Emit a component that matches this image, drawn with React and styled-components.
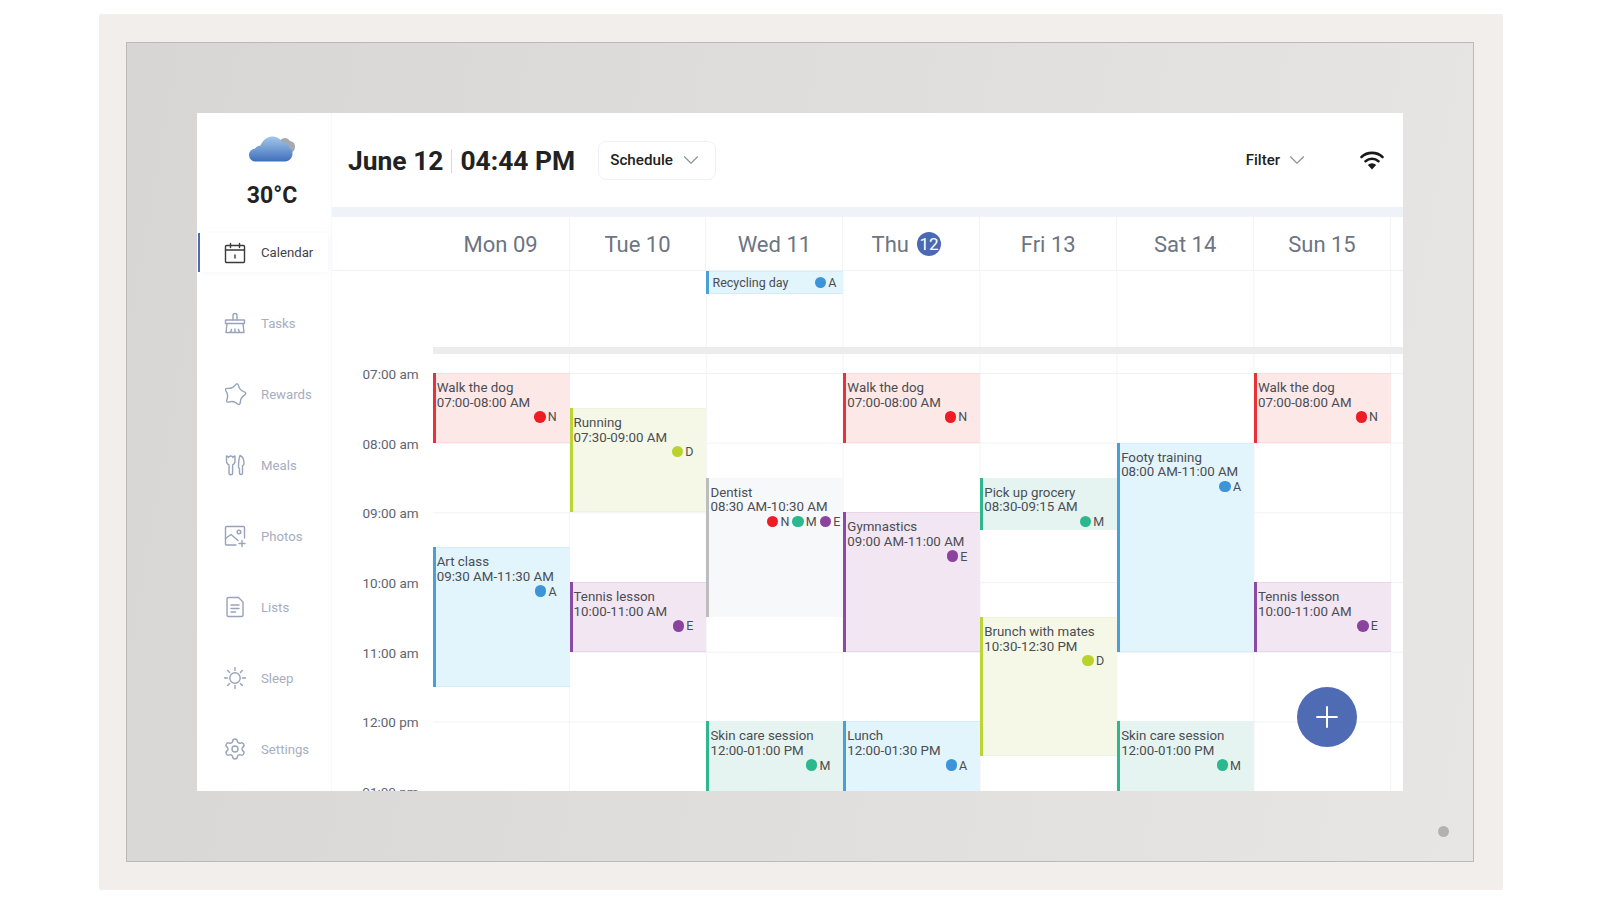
import styled, { createGlobalStyle } from "styled-components";
import { ChevronDown, Plus, Settings } from "lucide-react";

const HOUR = 69.7;
const DAY = 136.9;

const GlobalStyle = createGlobalStyle`
  html, body {
    margin:0;
    background:#ffffff;
    font-family:Roboto, "Liberation Sans", sans-serif;
  }
`
const Page = styled.div`
  width:1600px;
  height:900px;
  box-sizing:border-box;
  padding:14px 97px 10px 99px;
`
const Frame = styled.div`
  height:100%;
  box-sizing:border-box;
  padding:28px 29px 28px 27px;
  background:#f1eeec;
  border-radius:2px;
`
const Bezel = styled.div`
  position:relative;
  height:100%;
  box-sizing:border-box;
  padding:70px;
  background:linear-gradient(100deg, #d7d6d4 0%, #dfdedc 50%, #e7e6e4 100%);
  border:1px solid #bdb9b5;
`
const Camera = styled.div`
  position:absolute;
  right:24px;
  bottom:24px;
  width:11px;
  height:11px;
  border-radius:50%;
  background:#b2b2b2;
`
const Screen = styled.div`
  position:relative;
  height:100%;
  display:flex;
  overflow:hidden;
  background:#ffffff;
`
const Sidebar = styled.aside`
  width:135px;
  flex-shrink:0;
  box-sizing:border-box;
  border-right:1px solid #f8f9fb;
`
const Weather = styled.div`
  height:120px;
  display:flex;
  flex-direction:column;
  align-items:center;
  padding-top:22px;
  padding-left:16px;
  box-sizing:border-box;

  svg{
    width:46px;
    height:27px;
  }
`
const Temp = styled.div`
  margin-top:20px;
  font-size:23px;
  line-height:27px;
  font-weight:700;
  color:#222222;
`
const NavList = styled.nav`
  display:flex;
  flex-direction:column;
  gap:31.95px;
`
const NavItem = styled.div`
  height:39px;
  width:130px;
  margin-left:1px;
  box-sizing:border-box;
  display:flex;
  align-items:center;
  gap:14px;
  padding-left:${p => (p.$active ? "23px" : "25px")};
  border-left:${p => (p.$active ? "2px solid #4f6bb3" : "none")};
  box-shadow:${p => (p.$active ? "2px 1px 5px #eef1f780" : "none")};
  font-size:13.2px;
  color:${p => (p.$active ? "#3f4247" : "#a6aebf")};

  svg{
    width:24px;
    height:24px;
    flex-shrink:0;
    fill:none;
    stroke:${p => (p.$active ? "#3a3a3a" : "#98a3ba")};
    stroke-width:1.4;
    stroke-linecap:round;
    stroke-linejoin:round;
  }
`
const Main = styled.main`
  flex:1;
  min-width:0;
  display:flex;
  flex-direction:column;
`
const Header = styled.header`
  height:94px;
  flex-shrink:0;
  box-sizing:border-box;
  display:flex;
  align-items:center;
  padding:0 18px 0 16px;
`
const Title = styled.h1`
  margin:2px 0 0;
  display:flex;
  align-items:center;
  font-size:26.4px;
  line-height:32px;
  font-weight:700;
  color:#222222;
`
const TitleDivider = styled.span`
  width:1px;
  height:24px;
  margin:0 8px;
  background:#d9d9d9;
`
const ScheduleButton = styled.button`
  width:118px;
  height:39px;
  margin-left:23px;
  padding:0;
  display:flex;
  align-items:center;
  justify-content:center;
  gap:5px;
  background:#ffffff;
  border:1px solid #eef1f7;
  border-radius:8px;
  font-family:inherit;
  font-size:15.2px;
  font-weight:500;
  color:#222222;

  svg{
    width:26px;
    height:26px;
    stroke:#8a90a0;
    stroke-width:1;
  }
`
const FilterButton = styled(ScheduleButton)`
  width:auto;
  margin-left:auto;
  gap:4px;
  font-size:15px;
  border:none;
`
const WifiIcon = styled.svg`
  width:26px;
  height:20px;
  margin-left:49px;
`
const Bar = styled.div`
  height:10px;
  flex-shrink:0;
  background:#eff2f8;
`
const DayHead = styled.div`
  height:54px;
  flex-shrink:0;
  box-sizing:border-box;
  display:flex;
  padding-left:100.7px;
  border-bottom:1px solid #f1f2f4;
`
const DayCell = styled.div`
  width:${DAY}px;
  box-sizing:border-box;
  display:flex;
  align-items:center;
  justify-content:center;
  gap:8px;
  padding-top:1px;
  font-size:22px;
  color:#6d7482;
  border-right:1px solid #f3f4f6;
`
const TodayBadge = styled.span`
  width:24px;
  height:24px;
  margin-right:10px;
  border-radius:50%;
  display:flex;
  align-items:center;
  justify-content:center;
  background:#4b69b3;
  color:#ffffff;
  font-size:17px;
`
const AllDay = styled.div`
  height:76px;
  flex-shrink:0;
  display:grid;
  grid-template-columns:repeat(7, ${DAY}px);
  grid-template-rows:23px;
  margin-left:100.7px;
  background:linear-gradient(to left, #f3f4f6 1px, transparent 1px) 0 0 / ${DAY}px 100%;
`
const AllDayBar = styled.div`
  height:7px;
  flex-shrink:0;
  margin-left:100.7px;
  background:#ececec;
`
const Body = styled.div`
  flex:1;
  min-height:0;
  display:flex;
`
const Gutter = styled.div`
  width:100.7px;
  flex-shrink:0;
  box-sizing:border-box;
  padding:12px 14px 0 0;
  display:flex;
  flex-direction:column;
  align-items:flex-end;
`
const TimeLabel = styled.div`
  height:${HOUR}px;
  flex-shrink:0;
  font-size:13.5px;
  line-height:16px;
  color:#5f6570;
`
const Grid = styled.div`
  flex:1;
  min-width:0;
  box-sizing:border-box;
  padding-top:19px;
  display:grid;
  grid-template-columns:repeat(7, ${DAY}px);
  grid-auto-rows:${HOUR / 4}px;
  background:
    linear-gradient(to bottom, #f1f2f4 1px, transparent 1px) 0 19px / 100% ${HOUR}px,
    linear-gradient(to left, #f3f4f6 1px, transparent 1px) 0 0 / ${DAY}px 100%;
`
const EventCard = styled.div`
  grid-column:${p => p.$col + 1};
  grid-row:${p => p.$from + 1} / ${p => p.$to + 1};
  box-sizing:border-box;
  padding:8px 0 0 1px;
  background:${p => p.$tone.bg};
  border-left:3px solid ${p => p.$tone.line};
  box-shadow:inset 0 1px ${p => p.$tone.edge}, inset 0 -1px ${p => p.$tone.edge};
  font-size:13.3px;
  line-height:14.7px;
  color:#4a4d52;
  white-space:nowrap;
`
const AllDayCard = styled(EventCard)`
  grid-row:1;
  display:flex;
  align-items:center;
  padding:2px 7px 0 3px;
  font-size:12.5px;
`
const Who = styled.div`
  display:flex;
  justify-content:flex-end;
  gap:3px;
  padding-right:${p => (p.$tight ? "3px" : "13px")};
  ${AllDayCard} &{
    flex:1;
    padding-right:0;
  }
`
const Person = styled.span`
  display:flex;
  align-items:center;
  gap:2px;
  font-size:12.5px;
`
const Dot = styled.i`
  width:11.5px;
  height:11.5px;
  border-radius:50%;
  background:${p => p.$color};
  position:relative;
  top:-1px;
`
const Fab = styled.button`
  position:absolute;
  right:46px;
  bottom:44px;
  width:60px;
  height:60px;
  padding:0;
  display:flex;
  align-items:center;
  justify-content:center;
  border:none;
  border-radius:50%;
  background:#4f6bb3;
  color:#ffffff;

  svg{
    width:34px;
    height:34px;
    stroke-width:1.4;
  }
`

const tones = {
  red: { bg: "#fde8e8", line: "#e8323a", edge: "#fbdcdc" },
  lime: { bg: "#f5f8e7", line: "#bcd435", edge: "#f0f4dc" },
  blue: { bg: "#e2f4fc", line: "#4a9fd8", edge: "#d5edf8" },
  purple: { bg: "#f2e6f2", line: "#8a4ba3", edge: "#e8d6e8" },
  green: { bg: "#e6f4f1", line: "#2fb58f", edge: "#e6f4f1" },
  grey: { bg: "#f7f8fa", line: "#bdbdbd", edge: "#f7f8fa" },
};

const people = {
  N: "#ee1c25",
  M: "#2cb88f",
  E: "#8a44a0",
  A: "#3d94d9",
  D: "#b9d32c",
};

const days = ["Mon 09", "Tue 10", "Wed 11", "Thu", "Fri 13", "Sat 14", "Sun 15"];
const hours = ["07:00 am", "08:00 am", "09:00 am", "10:00 am", "11:00 am", "12:00 pm", "01:00 pm"];

// from / to are quarter hours counted from 07:00
const events = [
  { col: 0, from: 0, to: 4, title: "Walk the dog", time: "07:00-08:00 AM", tone: "red", who: "N" },
  { col: 0, from: 10, to: 18, title: "Art class", time: "09:30 AM-11:30 AM", tone: "blue", who: "A" },
  { col: 1, from: 2, to: 8, title: "Running", time: "07:30-09:00 AM", tone: "lime", who: "D" },
  { col: 1, from: 12, to: 16, title: "Tennis lesson", time: "10:00-11:00 AM", tone: "purple", who: "E" },
  { col: 2, from: 6, to: 14, title: "Dentist", time: "08:30 AM-10:30 AM", tone: "grey", who: "NME", tight: true },
  { col: 2, from: 20, to: 24, title: "Skin care session", time: "12:00-01:00 PM", tone: "green", who: "M" },
  { col: 3, from: 0, to: 4, title: "Walk the dog", time: "07:00-08:00 AM", tone: "red", who: "N" },
  { col: 3, from: 8, to: 16, title: "Gymnastics", time: "09:00 AM-11:00 AM", tone: "purple", who: "E" },
  { col: 3, from: 20, to: 26, title: "Lunch", time: "12:00-01:30 PM", tone: "blue", who: "A" },
  { col: 4, from: 6, to: 9, title: "Pick up grocery", time: "08:30-09:15 AM", tone: "green", who: "M" },
  { col: 4, from: 14, to: 22, title: "Brunch with mates", time: "10:30-12:30 PM", tone: "lime", who: "D" },
  { col: 5, from: 4, to: 16, title: "Footy training", time: "08:00 AM-11:00 AM", tone: "blue", who: "A" },
  { col: 5, from: 20, to: 24, title: "Skin care session", time: "12:00-01:00 PM", tone: "green", who: "M" },
  { col: 6, from: 0, to: 4, title: "Walk the dog", time: "07:00-08:00 AM", tone: "red", who: "N" },
  { col: 6, from: 12, to: 16, title: "Tennis lesson", time: "10:00-11:00 AM", tone: "purple", who: "E" },
];

const CloudIcon = () => (
  <svg viewBox="0 0 46 27">
    <defs>
      <linearGradient id="cloudBlue" x1="0" y1="0" x2="0" y2="1">
        <stop offset="0" stopColor="#a3c8ea" />
        <stop offset="1" stopColor="#3f6fbb" />
      </linearGradient>
    </defs>
    <path d="M30 8a6 6 0 0 1 11-2 6 6 0 0 1 5 6 6 6 0 0 1-5 6H34z" fill="#a4a9b1" />
    <path d="M7 26.500a6.500 6.500 0 0 1-1-13c1-1.500 3-3 5.500-3C14 5 18 1.500 23 1.500c5 0 8.500 2.500 10.500 6 4-.5 6.500 2 6.500 5.500 2.500.8 3.500 3 3.500 5.500 0 4-3 8-7.500 8z" fill="url(#cloudBlue)" />
  </svg>
);

const CalendarIcon = () => (
  <svg viewBox="0 0 24 24">
    <rect x="2.500" y="4.500" width="19" height="17" rx="1" />
    <path d="M2.500 9h19M7.500 2.500v4M16.500 2.500v4M12 14v3" />
  </svg>
);

const BroomIcon = () => (
  <svg viewBox="0 0 24 24">
    <path d="M10 9V4.500a2 2 0 0 1 4 0V9" />
    <rect x="2.500" y="9" width="19" height="3.500" rx=".5" />
    <path d="M4 12.500 3 21.500h18l-1-9M7.500 21.500l1-3M12 21.500v-3.500M16.500 21.500l-1-3" />
  </svg>
);

// soft five pointed star, every corner rounded through its control point
const starPoints = Array.from({ length: 10 }, (_, i) => {
  const r = i % 2 === 0 ? 12.8 : 6.4;
  const a = ((i * 36 + 12 - 90) * Math.PI) / 180;
  return [12 + r * Math.cos(a), 12.5 + r * Math.sin(a)];
});
const mid = (a, b) => [(a[0] + b[0]) / 2, (a[1] + b[1]) / 2];
const starPath =
  `M${mid(starPoints[9], starPoints[0]).join(" ")}` +
  starPoints.map((pt, i) => `Q${pt.join(" ")} ${mid(pt, starPoints[(i + 1) % 10]).join(" ")}`).join("") +
  "Z";

const StarIcon = () => (
  <svg viewBox="0 0 24 24">
    <path d={starPath} />
  </svg>
);

const MealIcon = () => (
  <svg viewBox="0 0 24 24">
    <path d="M3.500 3v5c0 2 1 3.200 2.500 3.800V20a1.800 1.800 0 0 0 3.600 0v-8.200c1.500-.6 2.400-1.800 2.400-3.800V3c-1 0-1.500.5-2 1.500-.5-1-1-1.500-2.200-1.500-1.200 0-1.800.5-2.300 1.500C5 3.500 4.500 3 3.500 3z" />
    <path d="M17 2.500c2.500 1 4 4 4 8 0 1.500-.8 2-1.500 2.500v7a1.500 1.500 0 0 1-3 0v-4l-1-2c0-4 .5-9 1.500-11.500z" />
  </svg>
);

const PhotoIcon = () => (
  <svg viewBox="0 0 24 24">
    <path d="M13 21H3.500a1 1 0 0 1-1-1V3.500a1 1 0 0 1 1-1h17a1 1 0 0 1 1 1V14" />
    <path d="M2.500 14.500 8 10.500l7 6" />
    <circle cx="16" cy="8" r="1.800" />
    <path d="M19 16.500v6M16 19.500h6" />
  </svg>
);

const ListIcon = () => (
  <svg viewBox="0 0 24 24">
    <path d="M5.500 2.500h10l4.500 4.500v13a1.500 1.500 0 0 1-1.500 1.500h-13A1.500 1.500 0 0 1 4 20V4a1.500 1.500 0 0 1 1.500-1.500z" />
    <path d="M8 10h8M8 13.500h8M8 17h4.500" />
  </svg>
);

const SunIcon = () => (
  <svg viewBox="0 0 24 24">
    <circle cx="12" cy="12" r="5.200" />
    <path d="M12 1.500v3M12 19.500v3M1.500 12h3M19.500 12h3M4.600 4.600l2 2M17.400 17.400l2 2M4.600 19.400l2-2M17.400 6.600l2-2" />
  </svg>
);

const WifiMark = () => (
  <WifiIcon viewBox="0 0 26 20">
    <g fill="none" stroke="#1a1a1a" strokeWidth="2.600" strokeLinecap="round">
      <path d="M2.500 7a15.500 15.500 0 0 1 21 0" />
      <path d="M6.500 11.200a10 10 0 0 1 13 0" />
    </g>
    <path d="M13 19.500 8.800 15a6 6 0 0 1 8.400 0z" fill="#1a1a1a" />
  </WifiIcon>
);

const navItems = [
  { label: "Calendar", Icon: CalendarIcon, active: true },
  { label: "Tasks", Icon: BroomIcon },
  { label: "Rewards", Icon: StarIcon },
  { label: "Meals", Icon: MealIcon },
  { label: "Photos", Icon: PhotoIcon },
  { label: "Lists", Icon: ListIcon },
  { label: "Sleep", Icon: SunIcon },
  { label: "Settings", Icon: Settings },
];

const WhoRow = ({ who, tight }) => (
  <Who $tight={tight}>
    {who.split("").map(letter => (
      <Person key={letter}>
        <Dot $color={people[letter]} />
        {letter}
      </Person>
    ))}
  </Who>
);

const App = () => {
  return (
    <Page>
      <GlobalStyle />
      <Frame>
        <Bezel>
          <Screen>
            <Sidebar>
              <Weather>
                <CloudIcon />
                <Temp>30°C</Temp>
              </Weather>
              <NavList>
                {navItems.map(({ label, Icon, active }) => (
                  <NavItem key={label} $active={active}>
                    <Icon />
                    {label}
                  </NavItem>
                ))}
              </NavList>
            </Sidebar>
            <Main>
              <Header>
                <Title>
                  June 12
                  <TitleDivider />
                  04:44 PM
                </Title>
                <ScheduleButton>
                  Schedule
                  <ChevronDown />
                </ScheduleButton>
                <FilterButton>
                  Filter
                  <ChevronDown />
                </FilterButton>
                <WifiMark />
              </Header>
              <Bar />
              <DayHead>
                {days.map(day => (
                  <DayCell key={day}>
                    {day}
                    {day === "Thu" && <TodayBadge>12</TodayBadge>}
                  </DayCell>
                ))}
              </DayHead>
              <AllDay>
                <AllDayCard $col={2} $from={0} $to={1} $tone={tones.blue}>
                  Recycling day
                  <WhoRow who="A" />
                </AllDayCard>
              </AllDay>
              <AllDayBar />
              <Body>
                <Gutter>
                  {hours.map(hour => (
                    <TimeLabel key={hour}>{hour}</TimeLabel>
                  ))}
                </Gutter>
                <Grid>
                  {events.map(ev => (
                    <EventCard
                      key={ev.col + ev.title}
                      $col={ev.col}
                      $from={ev.from}
                      $to={ev.to}
                      $tone={tones[ev.tone]}
                    >
                      <div>{ev.title}</div>
                      <div>{ev.time}</div>
                      <WhoRow who={ev.who} tight={ev.tight} />
                    </EventCard>
                  ))}
                </Grid>
              </Body>
            </Main>
            <Fab>
              <Plus />
            </Fab>
          </Screen>
          <Camera />
        </Bezel>
      </Frame>
    </Page>
  );
}

export default App;
